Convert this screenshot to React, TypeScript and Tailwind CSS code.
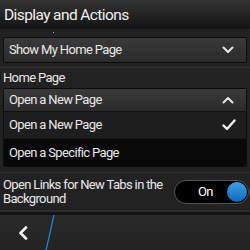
import React from "react";

const font = { fontFamily: "Roboto, 'Liberation Sans', sans-serif" };

function ChevronDown() {
  return (
    <svg width="12" height="8" viewBox="0 0 12 8" fill="none">
      <path d="M1.5 1.5 L6 6 L10.5 1.5" stroke="#e6e6e6" strokeWidth="2" strokeLinecap="round" strokeLinejoin="round" />
    </svg>
  );
}
function ChevronUp() {
  return (
    <svg width="12" height="8" viewBox="0 0 12 8" fill="none">
      <path d="M1.5 6.5 L6 2 L10.5 6.5" stroke="#e6e6e6" strokeWidth="2" strokeLinecap="round" strokeLinejoin="round" />
    </svg>
  );
}
function Check() {
  return (
    <svg width="14" height="12" viewBox="0 0 14 12" fill="none">
      <path d="M1.5 6.5 L5 10 L12.5 1.5" stroke="#f2f2f2" strokeWidth="2.4" strokeLinecap="round" strokeLinejoin="round" />
    </svg>
  );
}

export default function App() {
  return (
    <div className="w-[250px] h-[250px] overflow-hidden bg-[#222222] text-[#e8e8e8] flex flex-col text-[13px] tracking-[-0.65px]" style={font}>
      <div className="h-[29px] shrink-0 bg-gradient-to-b from-[#343434] to-[#141414] flex items-end pl-[4px] pb-[5px]">
        <span className="text-[15.5px] leading-[18px] tracking-[-0.6px] text-[#f0f0f0]">Display and Actions</span>
      </div>
      <div className="h-[8px] shrink-0 relative">
        <div className="absolute left-[53px] top-[3px] w-[1px] h-[1px] bg-[#bbbbbb]" />
      </div>
      <div className="mx-[3px] h-[26px] shrink-0 border border-[#0b0b0b] bg-gradient-to-b from-[#3a3a3a] to-[#2b2b2b] flex items-center justify-between pl-[5px] pr-[12px] rounded-[2px]">
        <span>Show My Home Page</span>
        <ChevronDown />
      </div>
      <div className="h-[4px] shrink-0" />
      <div className="h-[1px] shrink-0 bg-[#303030]" />
      <div className="h-[20px] shrink-0 flex items-center pl-[3px]">
        <span>Home Page</span>
      </div>
      <div className="mx-[3px] shrink-0 border border-[#0b0b0b] rounded-[2px] flex flex-col">
        <div className="h-[23px] bg-gradient-to-b from-[#3a3a3a] to-[#2b2b2b] border-b border-[#111111] flex items-center justify-between pl-[5px] pr-[12px]">
          <span>Open a New Page</span>
          <ChevronUp />
        </div>
        <div className="h-[27px] bg-[#1e1e1e] border-b border-[#151515] flex items-center justify-between pl-[5px] pr-[10px]">
          <span>Open a New Page</span>
          <Check />
        </div>
        <div className="h-[27px] bg-[#090909] flex items-center pl-[5px]">
          <span>Open a Specific Page</span>
        </div>
      </div>
      <div className="h-[5px] shrink-0" />
      <div className="h-[1px] shrink-0 bg-[#333333]" />
      <div className="h-[37px] shrink-0 flex items-center justify-between pl-[3px] pr-[1px]">
        <span className="leading-[14px] w-[165px]">Open Links for New Tabs in the Background</span>
        <div className="w-[75px] h-[24px] rounded-full bg-black border border-[#555555] flex items-center justify-between pl-[23px] pr-[1px]">
          <span className="text-white">On</span>
          <div className="w-[20px] h-[20px] rounded-full bg-gradient-to-b from-[#3f9ee6] to-[#0b68bd]" />
        </div>
      </div>
      <div className="h-[2px] shrink-0 bg-[#2c2c2c]" />
      <div className="h-[3px] shrink-0 bg-[#141414]" />
      <div className="flex-1 relative bg-gradient-to-b from-[#2a2a2a] to-[#232323] flex items-center pl-[18px]">
        <svg width="10" height="14" viewBox="0 0 10 14" fill="none">
          <path d="M8 1.5 L2.5 7 L8 12.5" stroke="#f0f0f0" strokeWidth="2.6" strokeLinecap="round" strokeLinejoin="round" />
        </svg>
        <svg className="absolute left-[44px] top-0" width="12" height="40" viewBox="0 0 12 40" fill="none">
          <path d="M10 0 L1 40" stroke="#1a8fe0" strokeWidth="1.2" />
        </svg>
      </div>
    </div>
  );
}
